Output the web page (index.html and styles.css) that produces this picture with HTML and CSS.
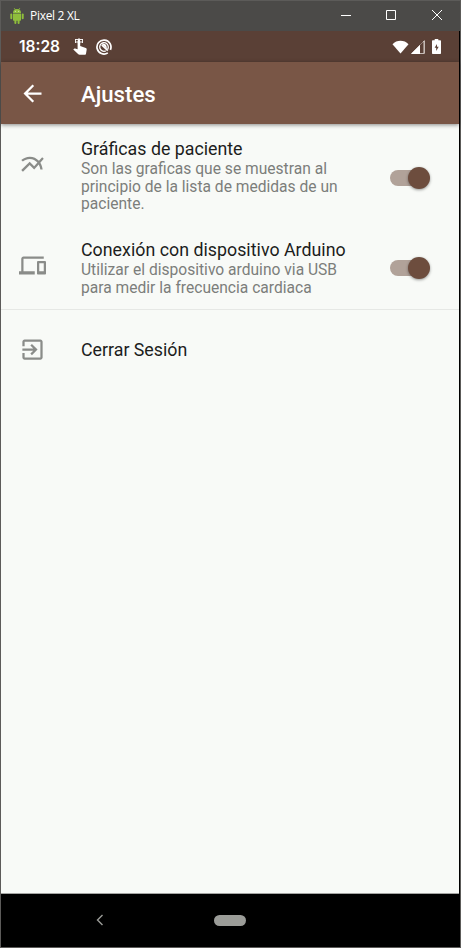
FILE: index.html
```html
<!DOCTYPE html>
<html lang="es">
<head>
<meta charset="utf-8">
<title>Ajustes</title>
<link rel="stylesheet" href="styles.css">
</head>
<body>
<div class="window">
  <header class="titlebar">
    <svg class="android" viewBox="0 0 14 16"><g fill="#8fbe3c"><path d="M3 5a4 4 0 0 1 8 0z"/><path d="M4 0l1.600 2M10 0L8.400 2" stroke="#8fbe3c" stroke-width=".7"/><path d="M3 5.600h8V12a.8.8 0 0 1-.8.8H3.800A.8.8 0 0 1 3 12z"/><rect x=".3" y="5.400" width="2" height="5.800" rx="1"/><rect x="11.700" y="5.400" width="2" height="5.800" rx="1"/><rect x="4.400" y="11" width="2" height="5" rx="1"/><rect x="7.600" y="11" width="2" height="5" rx="1"/></g><g fill="#e8f3d8"><circle cx="5.300" cy="3.300" r=".5"/><circle cx="8.700" cy="3.300" r=".5"/></g></svg>
    <span class="window-name">Pixel 2 XL</span>
    <div class="controls">
      <svg viewBox="0 0 12 12"><path d="M1 6.500h10"/></svg>
      <svg viewBox="0 0 12 12"><path d="M1.500 1.500h9v9h-9z"/></svg>
      <svg viewBox="0 0 12 12"><path d="M1 1l10 10M11 1L1 11"/></svg>
    </div>
  </header>
  <div class="screen">
    <div class="status">
      <span class="clock">18:28</span>
      <svg class="touch" viewBox="0 0 14 17" fill="#fff"><path d="M4.600 6V3a1.300 1.300 0 0 1 2.600 0v5l5.600 2c.7.300 1 .8.900 1.500l-.7 4.200c-.1.700-.6 1.100-1.300 1.100H6.500c-.5 0-.9-.2-1.200-.5L.3 11.600l.8-.8c.3-.3.600-.3 1-.2l2.500.6z"/><path d="M2.200 1.500h7.600M2.200 4h7.600M2.500 1v4M9.500 1v4M6 0v2" stroke="#fff" stroke-width=".9"/></svg>
      <svg class="target" viewBox="0 0 16 16" fill="none" stroke="#fff"><path d="M11.800 13.900A7 7 0 1 1 14.400 10.800" stroke-width="1.700"/><path d="M9.800 11.900A4.300 4.300 0 1 1 12.300 8c0 1-.2 1.700-.7 2.400" stroke-width="1.300"/><path d="M5.800 6l6 5.700" stroke-width="1.700"/><path d="M6 5.300c2.500-1.400 5.200.4 4.800 4.600z" fill="#fff" stroke="none"/></svg>
      <div class="system">
        <svg class="wifi" viewBox="0 0 18 14"><path d="M.5 4C5-.8 13-.8 17.500 4L9 14z" fill="#fff"/></svg>
        <svg class="signal" viewBox="0 0 14 14"><path d="M13.400.7v12.700H.7z" fill="#8f7e75" stroke="#e8e2df" stroke-width=".8"/><path d="M9 5v9H0z" fill="#fff"/><path d="M9 5l3-3v11H9z" fill="#5a4036"/></svg>
        <svg class="battery" viewBox="0 0 9 15"><path d="M2.700 0h3.600v1.200H8c.6 0 1 .4 1 1V14c0 .6-.4 1-1 1H1c-.6 0-1-.4-1-1V2.200c0-.6.4-1 1-1h1.700z" fill="#fff"/><path d="M5 5L2.600 8.700h1.600v3.200l2.500-4.100H5z" fill="#5a4036"/></svg>
      </div>
    </div>
    <div class="appbar">
      <svg class="back" viewBox="0 0 24 24"><path fill="#fff" d="M20 11H7.830l5.590-5.590L12 4l-8 8 8 8 1.410-1.410L7.830 13H20v-2z"/></svg>
      <h1>Ajustes</h1>
    </div>
    <main>
      <section class="row first">
        <svg class="icon" viewBox="0 0 24 24"><path d="M22 6.920l-1.410-1.410-2.850 3.210C15.680 6.400 12.830 5 9.610 5 6.720 5 4.070 6.160 2 8l1.420 1.420C5.120 7.930 7.270 7 9.610 7c2.740 0 5.090 1.260 6.770 3.240l-2.880 3.240-4-4L2 16.990l1.500 1.500 6-6.010 4 4 4.050-4.550c.75 1.350 1.250 2.900 1.440 4.550H21c-.22-2.300-.95-4.390-2.040-6.140L22 6.920z"/></svg>
        <div class="copy">
          <h2>Gráficas de paciente</h2>
          <p>Son las graficas que se muestran al<br>principio de la lista de medidas de un<br>paciente.</p>
        </div>
        <div class="switch"></div>
      </section>
      <section class="row second">
        <svg class="icon" viewBox="0 0 24 24"><path d="M4 6h18V4H4c-1.100 0-2 .9-2 2v11H0v3h14v-3H4V6zm19 2h-6c-.55 0-1 .45-1 1v10c0 .55.450 1 1 1h6c.55 0 1-.45 1-1V9c0-.55-.45-1-1-1zm-1 9h-4v-7h4v7z"/></svg>
        <div class="copy">
          <h2>Conexión con dispositivo Arduino</h2>
          <p>Utilizar el dispositivo arduino via USB<br>para medir la frecuencia cardiaca</p>
        </div>
        <div class="switch"></div>
      </section>
      <section class="row logout">
        <svg class="icon" viewBox="0 0 24 24"><path d="M10.090 15.590L11.500 17l5-5-5-5-1.410 1.410L12.670 11H3v2h9.670l-2.580 2.590zM19 3H5c-1.110 0-2 .9-2 2v4h2V5h14v14H5v-4H3v4c0 1.100.89 2 2 2h14c1.100 0 2-.9 2-2V5c0-1.100-.9-2-2-2z"/></svg>
        <div class="copy"><h2>Cerrar Sesión</h2></div>
      </section>
    </main>
    <nav>
      <svg class="nav-back" viewBox="0 0 8 12"><path d="M6.500 1L1.500 6l5 5" fill="none" stroke="#9b9c98" stroke-width="1.400"/></svg>
      <div class="home"></div>
    </nav>
  </div>
</div>
</body>
</html>
```

FILE: styles.css
```css
* { box-sizing: border-box; }
body { margin: 0; font-family: Roboto, "Liberation Sans", sans-serif; }
svg { display: block; flex: none; }
h1, h2, p { margin: 0; font-weight: 400; white-space: nowrap; }

.window {
  width: 461px;
  height: 948px;
  border: 1px solid #5c5b59;
  background: #000;
  display: flex;
  flex-direction: column;
}
.titlebar {
  height: 30px;
  background: #4b4a48;
  display: flex;
  align-items: center;
  padding-left: 9px;
}
.android { width: 14px; height: 16px; margin-top: -1px; }
.window-name {
  margin-left: 6px;
  color: #fff;
  font: 12px/16px "Open Sans", sans-serif;
  letter-spacing: -0.3px;
}
.controls { margin: -2px 17px 0 auto; display: flex; gap: 34px; }
.controls svg { width: 12px; height: 12px; fill: none; stroke: #fff; stroke-width: 1; }
.controls svg:first-child { margin-right: -1px; }

.screen {
  flex: 1;
  display: flex;
  flex-direction: column;
  margin-right: 1px;
}
.status {
  height: 31px;
  background: #5a4036;
  display: flex;
  align-items: center;
  padding-left: 18px;
}
.clock {
  width: 41px;
  color: #fff;
  font: 600 15.5px/20px Inter, sans-serif;
}
.touch { width: 14px; height: 17px; margin-left: 13px; }
.target { width: 16px; height: 16px; margin-left: 9px; }
.system { margin-left: auto; display: flex; align-items: center; padding-right: 18px; }
.wifi { width: 17px; height: 14px; }
.signal { width: 14px; height: 14px; margin-left: 2px; }
.battery { width: 9px; height: 15px; margin-left: 7px; }

.appbar {
  height: 62px;
  background: #795646;
  display: flex;
  align-items: center;
  padding-left: 18px;
  box-shadow: 0 1px 4px rgba(0, 0, 0, .45);
  z-index: 1;
}
.back { width: 27px; height: 27px; }
.appbar h1 {
  margin: 2px 0 0 35px;
  color: #fff;
  font-size: 22.2px;
  font-weight: 500;
  line-height: 28px;
}

main {
  flex: 1;
  background: #f8faf7;
  border-bottom: 1px solid #a4a5a3;
}
.row {
  display: flex;
  align-items: flex-start;
  padding-left: 18px;
  padding-right: 29px;
}
.first { height: 102px; padding-top: 14px; }
.second { height: 84px; padding-top: 13px; border-bottom: 1px solid #e6e8e5; }
.logout { padding-top: 29px; }
.icon { width: 27px; height: 27px; fill: #8a8c89; }
.first .icon { margin-top: 13px; }
.second .icon { margin-top: 13px; }
.logout .icon { margin-top: -3px; }
.copy { margin-left: 35px; flex: 1; }
.copy h2 { color: #1c1d1c; font-size: 17.8px; line-height: 21px; }
.second h2 { letter-spacing: .02px; }
.copy p { margin-top: 2px; color: #7c7e7b; font-size: 15.6px; line-height: 17.6px; }
.switch {
  width: 40px;
  height: 16px;
  margin-top: 32px;
  display: flex;
  align-items: center;
  justify-content: flex-end;
  border-radius: 8px;
  background: linear-gradient(#b1a299, #b1a299) 0 0 / 30px 16px no-repeat;
}
.second .switch { margin-top: 21px; }
.switch::after {
  content: "";
  width: 22px;
  height: 22px;
  flex: none;
  border-radius: 50%;
  background: #6d4d3e;
  box-shadow: 0 1px 3px rgba(0, 0, 0, .4);
}

nav {
  height: 53px;
  background: #000;
  display: flex;
  align-items: center;
  padding-left: 95px;
}
.nav-back { width: 8px; height: 12px; margin-top: -1px; }
.home { width: 32px; height: 11px; margin-left: 110px; border-radius: 6px; background: #9b9c98; }
```
